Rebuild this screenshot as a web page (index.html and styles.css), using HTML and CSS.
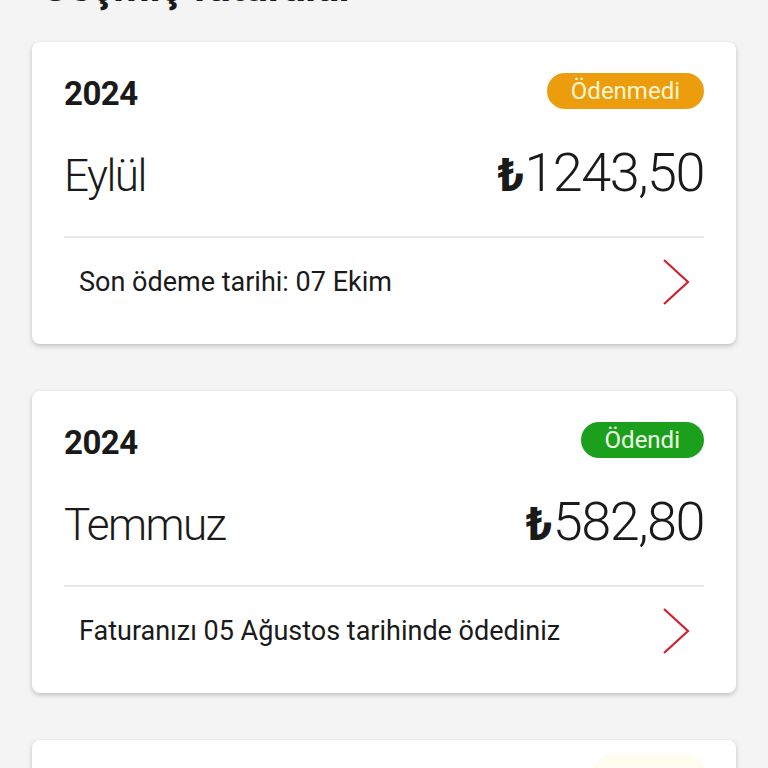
FILE: index.html
```html
<!DOCTYPE html>
<html lang="tr">
    <head>
        <meta charset="UTF-8">
        <meta name="viewport" content="width=device-width, initial-scale=1.0">
        <title>Geçmiş faturalar</title>

        <link rel="stylesheet" href="styles.css">
    </head>
    <body>
        <main class="bills">
            <h1 class="bills-title">Geçmiş faturalar</h1>

            <section class="bill-card">
                <div class="bill-top">
                    <strong class="bill-year">2024</strong>
                    <span class="bill-badge unpaid">Ödenmedi</span>
                </div>
                <div class="bill-main">
                    <span class="bill-month">Eylül</span>
                    <span class="bill-amount"><b>₺</b>1243,50</span>
                </div>
                <a class="bill-foot" href="#">
                    <span>Son ödeme tarihi: 07 Ekim</span>
                    <svg class="chevron" viewBox="0 0 28 48" width="28" height="48"><path d="M2 2 L26 24 L2 46"/></svg>
                </a>
            </section>

            <section class="bill-card">
                <div class="bill-top">
                    <strong class="bill-year">2024</strong>
                    <span class="bill-badge paid">Ödendi</span>
                </div>
                <div class="bill-main">
                    <span class="bill-month">Temmuz</span>
                    <span class="bill-amount"><b>₺</b>582,80</span>
                </div>
                <a class="bill-foot" href="#">
                    <span>Faturanızı 05 Ağustos tarihinde ödediniz</span>
                    <svg class="chevron" viewBox="0 0 28 48" width="28" height="48"><path d="M2 2 L26 24 L2 46"/></svg>
                </a>
            </section>

            <!-- next card, only its top edge is on screen -->
            <section class="bill-card next">
                <div class="bill-top">
                    <span class="bill-badge ghost"></span>
                </div>
            </section>
        </main>
    </body>
</html>
```

FILE: styles.css
```css
* {
    padding: 0px;
    margin: 0px;
    box-sizing: border-box;
    font-family: Roboto, "Liberation Sans", sans-serif;
}

body {
    background-color: #f4f4f4;
    color: #1a1a1a;
    overflow: hidden;
}

.bills {
    margin-top: -37px;
    padding: 0 32px;
    display: flex;
    flex-direction: column;
    gap: 47px;
}

.bills-title {
    font-size: 42px;
    line-height: 48px;
    font-weight: 700;
    padding-left: 8px;
    margin-bottom: -16px;
}

.bill-card {
    background-color: #fff;
    border-radius: 8px;
    box-shadow: 0 2px 5px rgba(0, 0, 0, 0.22);
    padding: 31px 32px 18px;
}

.bill-card.next {
    height: 80px;
    padding-top: 14px;
}

.bill-top {
    display: flex;
    justify-content: space-between;
    align-items: center;
    height: 36px;
}

.bill-year {
    font-size: 33px;
    font-weight: 700;
    letter-spacing: -0.5px;
    padding-top: 4px;
}

.bill-badge {
    height: 36px;
    border-radius: 18px;
    padding: 0 24px;
    font-size: 24px;
    line-height: 36px;
    font-weight: 400;
    color: #fff6d0;
}

.bill-badge.unpaid {
    background-color: #eb9d0e;
}

.bill-badge.paid {
    background-color: #1aa01c;
    color: #f2ffe8;
}

.bill-badge.ghost {
    margin-left: auto;
    width: 110px;
    background-color: #fffcf0;
}

.bill-main {
    display: flex;
    justify-content: space-between;
    align-items: baseline;
    height: 129px;
    padding-top: 34px;
    border-bottom: 2px solid #e8e8e8;
}

.bill-month {
    font-size: 44px;
    line-height: 60px;
    font-weight: 300;
    letter-spacing: -1.5px;
}

.bill-amount {
    font-size: 54px;
    line-height: 60px;
    font-weight: 300;
    letter-spacing: -1.5px;
}

.bill-amount b {
    font-weight: 700;
    font-size: 46px;
    letter-spacing: 0;
}

.bill-foot {
    display: flex;
    justify-content: space-between;
    align-items: center;
    height: 88px;
    padding: 0 14px 0 15px;
    text-decoration: none;
    color: #1a1a1a;
    font-size: 27px;
}

.chevron path {
    fill: none;
    stroke: #d0202c;
    stroke-width: 2.2;
}
```
